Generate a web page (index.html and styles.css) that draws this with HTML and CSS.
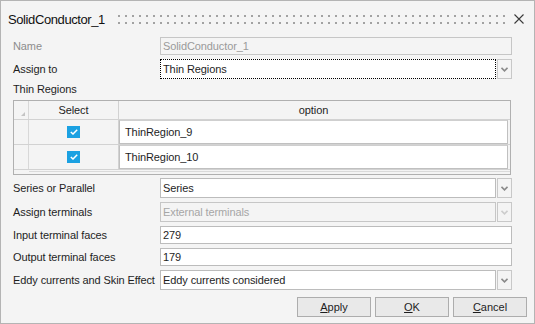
FILE: index.html
```html
<!DOCTYPE html>
<html lang="en">
<head>
    <meta charset="UTF-8">
    <title>SolidConductor_1</title>
    <link rel="stylesheet" href="styles.css">
</head>
<body>
    <div class="dialog">
        <div class="titlebar">
            <span class="title">SolidConductor_1</span>
            <span class="grip"></span>
            <span class="close">
                <svg width="10" height="10" viewBox="0 0 10 10"><path d="M0.5 0.5 L9.5 9.5 M9.5 0.5 L0.5 9.5" stroke="#3a3a3a" stroke-width="1.1" fill="none"/></svg>
            </span>
        </div>

        <div class="form">
            <div class="row">
                <span class="label disabled">Name</span>
                <div class="textbox disabled">SolidConductor_1</div>
            </div>
            <div class="row">
                <span class="label">Assign to</span>
                <div class="combo">
                    <div class="combo-value focused">Thin Regions</div>
                    <div class="combo-btn"><svg width="7" height="5" viewBox="0 0 7 5"><path d="M0.5 0.8 L3.5 3.8 L6.5 0.8" stroke="#8a8a8a" stroke-width="1.6" fill="none"/></svg></div>
                </div>
            </div>

            <div class="section-label">Thin Regions</div>

            <!-- Thin regions grid -->
            <div class="grid">
                <div class="grid-head">
                    <div class="cell rowhead corner"><span class="corner-tri"></span></div>
                    <div class="cell select">Select</div>
                    <div class="cell option">option</div>
                </div>
                <div class="grid-row">
                    <div class="cell rowhead"></div>
                    <div class="cell select"><span class="check"><svg width="8" height="6" viewBox="0 0 8 6"><path d="M0.8 3 L3 5 L7.2 0.8" stroke="#fff" stroke-width="1.5" fill="none"/></svg></span></div>
                    <div class="cell option"><div class="option-box">ThinRegion_9</div></div>
                </div>
                <div class="grid-row">
                    <div class="cell rowhead"></div>
                    <div class="cell select"><span class="check"><svg width="8" height="6" viewBox="0 0 8 6"><path d="M0.8 3 L3 5 L7.2 0.8" stroke="#fff" stroke-width="1.5" fill="none"/></svg></span></div>
                    <div class="cell option"><div class="option-box">ThinRegion_10</div></div>
                </div>
                <div class="grid-foot">
                    <div class="foot-gap"></div>
                    <div class="foot-bar"></div>
                </div>
            </div>

            <div class="row after-grid">
                <span class="label">Series or Parallel</span>
                <div class="combo">
                    <div class="combo-value">Series</div>
                    <div class="combo-btn"><svg width="7" height="5" viewBox="0 0 7 5"><path d="M0.5 0.8 L3.5 3.8 L6.5 0.8" stroke="#8a8a8a" stroke-width="1.6" fill="none"/></svg></div>
                </div>
            </div>
            <div class="row">
                <span class="label">Assign terminals</span>
                <div class="combo disabled">
                    <div class="combo-value">External terminals</div>
                    <div class="combo-btn"><svg width="7" height="5" viewBox="0 0 7 5"><path d="M0.5 0.8 L3.5 3.8 L6.5 0.8" stroke="#cdcdcd" stroke-width="1.6" fill="none"/></svg></div>
                </div>
            </div>
            <div class="row">
                <span class="label">Input terminal faces</span>
                <div class="textbox">279</div>
            </div>
            <div class="row">
                <span class="label">Output terminal faces</span>
                <div class="textbox">179</div>
            </div>
            <div class="row">
                <span class="label">Eddy currents and Skin Effect</span>
                <div class="combo">
                    <div class="combo-value">Eddy currents considered</div>
                    <div class="combo-btn"><svg width="7" height="5" viewBox="0 0 7 5"><path d="M0.5 0.8 L3.5 3.8 L6.5 0.8" stroke="#8a8a8a" stroke-width="1.6" fill="none"/></svg></div>
                </div>
            </div>
        </div>

        <div class="buttons">
            <button><u>A</u>pply</button>
            <button><u>O</u>K</button>
            <button><u>C</u>ancel</button>
        </div>
    </div>
</body>
</html>
```

FILE: styles.css
```css
body {
    margin: 0;
    font-family: "Liberation Sans", Arial, sans-serif;
    font-size: 11px;
    letter-spacing: -0.1px;
    color: #1e1e1e;
}
.dialog {
    width: 535px;
    height: 324px;
    box-sizing: border-box;
    border: 1px solid #b4b4b4;
    background-color: #f4f4f4;
}

/* Title bar */
.titlebar {
    height: 36px;
    display: flex;
    align-items: center;
    padding-left: 7px;
}
.title {
    width: 110px;
    flex-shrink: 0;
    font-size: 13px;
    letter-spacing: -0.4px;
    color: #111;
}
.grip {
    flex: 1;
    height: 9px;
    margin-top: 1px;
    background-image: linear-gradient(90deg, #a2a2a2 2px, transparent 2px);
    background-size: 7px 9px;
    -webkit-mask-image: linear-gradient(#000 2px, transparent 2px);
    -webkit-mask-size: 100% 7px;
    mask-image: linear-gradient(#000 2px, transparent 2px);
    mask-size: 100% 7px;
}
.close {
    width: 10px;
    height: 10px;
    margin: 0 10px 0 9px;
    display: flex;
}

/* Form rows */
.form {
    padding: 0 22px 0 12px;
}
.row {
    display: flex;
    align-items: center;
    margin-bottom: 4px;
}
.label {
    width: 147px;
    flex-shrink: 0;
    white-space: nowrap;
}
.label.disabled {
    color: #8d8d8d;
}
.textbox {
    flex: 1;
    height: 18px;
    box-sizing: border-box;
    border: 1px solid #bcbcbc;
    background-color: #fff;
    padding-left: 2px;
    line-height: 16px;
}
.textbox.disabled {
    background-color: #f4f4f4;
    border-color: #c6c6c6;
    color: #9a9a9a;
}
.combo {
    flex: 1;
    height: 20px;
    display: flex;
    gap: 1px;
}
.combo-value {
    flex: 1;
    box-sizing: border-box;
    border: 1px solid #bcbcbc;
    background-color: #fff;
    padding-left: 2px;
    line-height: 18px;
}
.combo-value.focused {
    border: 1px dotted #000;
}
.combo-btn {
    width: 15px;
    box-sizing: border-box;
    border: 1px solid #c8c8c8;
    display: flex;
    align-items: center;
    justify-content: center;
}
.combo.disabled .combo-value {
    background-color: #f4f4f4;
    border-color: #c6c6c6;
    color: #a6a6a6;
}
.section-label {
    height: 21px;
    line-height: 21px;
    margin-top: -4px;
}

/* Grid */
.grid {
    width: 498px;
    box-sizing: border-box;
    border: 1px solid #b0b0b0;
    background-color: #f4f4f4;
}
.grid-head, .grid-row {
    display: flex;
    border-bottom: 1px solid #d2d2d2;
}
.grid-head {
    height: 18px;
}
.grid-row {
    height: 24px;
}
.cell {
    display: flex;
    align-items: center;
    justify-content: center;
    box-sizing: border-box;
}
.rowhead {
    width: 15px;
    border-right: 1px solid #d8d8d8;
    position: relative;
}
.select {
    width: 90px;
    border-right: 1px solid #d2d2d2;
}
.option {
    flex: 1;
    align-items: stretch;
    padding-right: 2px;
}
.grid-head .option {
    align-items: center;
}
.corner-tri {
    position: absolute;
    right: 3px;
    bottom: 3px;
    width: 0;
    height: 0;
    border-left: 4px solid transparent;
    border-bottom: 4px solid #c4c4c4;
}
.option-box {
    flex: 1;
    box-sizing: border-box;
    border: 1px solid #c0c0c0;
    border-top-color: #cfcfcf;
    background-color: #fff;
    padding-left: 5px;
    display: flex;
    align-items: center;
}
.check {
    width: 13px;
    height: 12px;
    background-color: #1ba1e2;
    display: flex;
    align-items: center;
    justify-content: center;
}
.grid-foot {
    height: 4px;
    display: flex;
}
.foot-gap {
    width: 15px;
}
.foot-bar {
    flex: 1;
    margin-top: 1px;
    border-top: 1px solid #dadada;
}
.after-grid {
    margin-top: 3px;
}

/* Bottom buttons */
.buttons {
    display: flex;
    justify-content: flex-end;
    gap: 4px;
    padding: 3px 7px 0 0;
}
button {
    width: 74px;
    height: 20px;
    border: 1px solid #adadad;
    background-color: #e9e9e9;
    font-family: "Liberation Sans", Arial, sans-serif;
    font-size: 11px;
    color: #1e1e1e;
    padding: 0;
}
```
